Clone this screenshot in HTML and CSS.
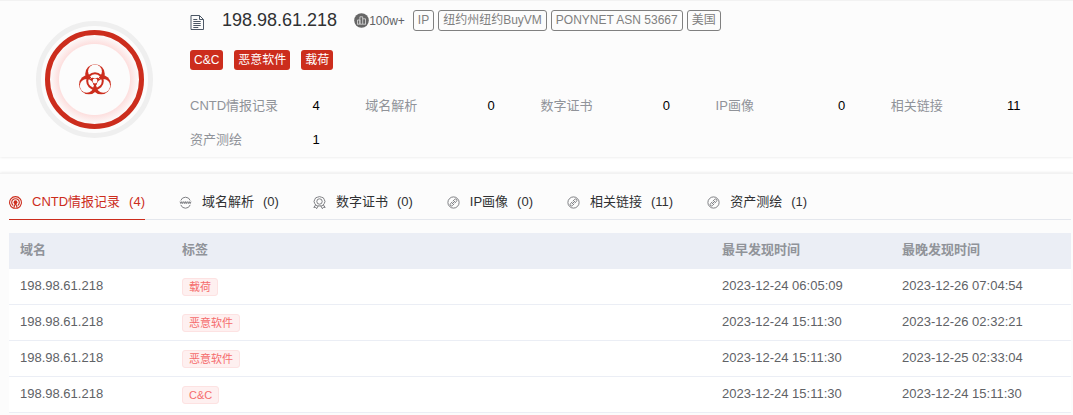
FILE: index.html
```html
<!DOCTYPE html>
<html lang="zh-CN">
<head>
    <meta charset="UTF-8">
    <meta name="viewport" content="width=device-width, initial-scale=1.0">
    <title>198.98.61.218</title>
    <link rel="stylesheet" href="styles.css">
</head>
<body>
    <svg class="sprite" aria-hidden="true">
        <symbol id="icon-compass" viewBox="0 0 13 13">
            <circle cx="6.5" cy="6.5" r="5.6"/>
            <path d="M5.8 5.2 7.6 3.4a1.2 1.2 0 0 1 1.9 1.9L7.7 7.2M7.2 7.8 5.4 9.6a1.2 1.2 0 0 1-1.9-1.9L5.3 5.8M4.9 8.1 8.1 4.9"/>
        </symbol>
    </svg>

    <section class="card summary">
        <div class="level">
            <div class="level-inner">
                <svg class="biohazard" viewBox="0 0 32 32">
                    <mask id="lobes">
                        <rect width="32" height="32" fill="#fff"/>
                        <circle cx="16" cy="7.4" r="6.9" fill="#000"/>
                        <circle cx="7.7" cy="21.8" r="6.9" fill="#000"/>
                        <circle cx="24.3" cy="21.8" r="6.9" fill="#000"/>
                        <circle cx="16" cy="17" r="2.4" fill="#000"/>
                    </mask>
                    <g mask="url(#lobes)">
                        <circle cx="16" cy="10" r="9.8"/>
                        <circle cx="9.9" cy="20.5" r="9.8"/>
                        <circle cx="22.1" cy="20.5" r="9.8"/>
                    </g>
                    <path class="gap" d="M11.6 14.5a5 5 0 0 1 8.8 0M20.9 17.7a5 5 0 0 1-3.8 4.2M14.9 21.9a5 5 0 0 1-3.8-4.2"/>
                    <circle class="ring" cx="16" cy="17" r="7.8"/>
                </svg>
            </div>
        </div>
        <div class="info">
            <div class="title-row">
                <svg class="doc" viewBox="0 0 14 15">
                    <path d="M1 .5h8.5l4 4v10H1zM9.5 .5v4h4M3.3 4.5h4M3.3 6.5h7.4M3.3 8.5h7.4M3.3 10.5h7.4M3.3 12.5h5"/>
                </svg>
                <h1>198.98.61.218</h1>
                <span class="hot">
                    <svg viewBox="0 0 15 15">
                        <circle cx="7.5" cy="7.5" r="7.3"/>
                        <path d="M3.5 11V7h2.4v4M5.9 11V3.8h2.8V11M8.7 5.8h2.8V11M3 11.2h9"/>
                    </svg>100w+
                </span>
                <div class="attrs">
                    <span>IP</span>
                    <span>纽约州纽约BuyVM</span>
                    <span>PONYNET ASN 53667</span>
                    <span>美国</span>
                </div>
            </div>
            <div class="threats">
                <span>C&amp;C</span>
                <span>恶意软件</span>
                <span>载荷</span>
            </div>
            <dl class="stats">
                <div><dt>CNTD情报记录</dt><dd>4</dd></div>
                <div><dt>域名解析</dt><dd>0</dd></div>
                <div><dt>数字证书</dt><dd>0</dd></div>
                <div><dt>IP画像</dt><dd>0</dd></div>
                <div><dt>相关链接</dt><dd>11</dd></div>
                <div><dt>资产测绘</dt><dd>1</dd></div>
            </dl>
        </div>
    </section>

    <section class="card detail">
        <nav class="tabs" role="tablist">
            <button class="tab active" role="tab" aria-selected="true">
                <svg viewBox="0 0 13 13">
                    <path d="M4 11.9a5.9 5.9 0 1 1 5 0M4.3 9.6a3.8 3.8 0 1 1 4.4 0"/>
                    <circle class="solid" cx="6.5" cy="6.2" r="1.9"/>
                    <path d="M6.5 7 4.6 12.2h3.8z"/>
                </svg>
                <span>CNTD情报记录</span><span>(4)</span>
            </button>
            <button class="tab" role="tab" aria-selected="false">
                <svg viewBox="0 0 13 13">
                    <path d="M1.8 4.5a5 5 0 0 1 9.4 0M1.8 8.9a5 5 0 0 0 9.4 0M1 5.6l.9 2 .9-2 .9 2 .9-2M4.9 5.6l.8 2 .8-2 .8 2 .8-2M8.5 5.6l.8 2 .9-2 .9 2 .9-2"/>
                </svg>
                <span>域名解析</span><span>(0)</span>
            </button>
            <button class="tab" role="tab" aria-selected="false">
                <svg viewBox="0 0 13 13">
                    <path d="M6.5.6 8.4 1.2 10.3 1.8 11.3 3.6 12 5.5 11.3 7.4 10.2 9.1 8.4 9.9H4.6L2.8 9.1 1.7 7.4 1 5.5 1.7 3.6 2.7 1.8 4.6 1.2zM2.6 9 .8 11.4l1.9-.1.9 1.4 1.6-2.8M10.4 9l1.8 2.4-1.9-.1-.9 1.4-1.6-2.8"/>
                    <circle cx="6.5" cy="5.5" r="2.7"/>
                </svg>
                <span>数字证书</span><span>(0)</span>
            </button>
            <button class="tab" role="tab" aria-selected="false">
                <svg><use href="#icon-compass"/></svg>
                <span>IP画像</span><span>(0)</span>
            </button>
            <button class="tab" role="tab" aria-selected="false">
                <svg><use href="#icon-compass"/></svg>
                <span>相关链接</span><span>(11)</span>
            </button>
            <button class="tab" role="tab" aria-selected="false">
                <svg><use href="#icon-compass"/></svg>
                <span>资产测绘</span><span>(1)</span>
            </button>
        </nav>

        <table class="records">
            <colgroup>
                <col class="col-name">
                <col>
                <col class="col-time">
                <col class="col-time">
            </colgroup>
            <thead>
                <tr><th>域名</th><th>标签</th><th>最早发现时间</th><th>最晚发现时间</th></tr>
            </thead>
            <tbody>
                <tr>
                    <td>198.98.61.218</td>
                    <td><span class="tag">载荷</span></td>
                    <td>2023-12-24 06:05:09</td>
                    <td>2023-12-26 07:04:54</td>
                </tr>
                <tr>
                    <td>198.98.61.218</td>
                    <td><span class="tag">恶意软件</span></td>
                    <td>2023-12-24 15:11:30</td>
                    <td>2023-12-26 02:32:21</td>
                </tr>
                <tr>
                    <td>198.98.61.218</td>
                    <td><span class="tag">恶意软件</span></td>
                    <td>2023-12-24 15:11:30</td>
                    <td>2023-12-25 02:33:04</td>
                </tr>
                <tr>
                    <td>198.98.61.218</td>
                    <td><span class="tag">C&amp;C</span></td>
                    <td>2023-12-24 15:11:30</td>
                    <td>2023-12-24 15:11:30</td>
                </tr>
            </tbody>
        </table>
    </section>
</body>
</html>
```

FILE: styles.css
```css
:root {
    --red: #cc2d1d;
    --card: #fcfcfc;
    --muted: #909399;
    --text: #606266;
}

* {
    box-sizing: border-box;
}

body {
    margin: 0;
    background: #fff;
    color: #303133;
    font-family: "Liberation Sans", Arial, "Noto Sans CJK SC", sans-serif;
    font-size: 13px;
    line-height: 18px;
}

.sprite {
    display: none;
}

.card {
    background: var(--card);
    border-top: 1px solid #f2f2f2;
    box-shadow: 0 0 3px rgba(0, 0, 0, 0.12);
}

/* Summary */
.summary {
    display: flex;
    gap: 37px;
    padding: 9px 7px 0 36px;
    margin-bottom: 16px;
}

.level {
    flex: none;
    width: 117px;
    height: 117px;
    margin-top: 11px;
    padding: 4px;
    border: 5px solid #efefef;
    border-radius: 50%;
}

.level-inner {
    display: flex;
    align-items: center;
    justify-content: center;
    height: 100%;
    border: 5px solid var(--red);
    border-radius: 50%;
    background: radial-gradient(circle, var(--card) 35px, #fde0df 36px, var(--card) 45px);
}

.biohazard {
    width: 32px;
    height: 32px;
    fill: var(--red);
}

.biohazard .ring {
    fill: none;
    stroke: var(--red);
    stroke-width: 2;
}

.biohazard .gap {
    fill: none;
    stroke: var(--card);
    stroke-width: 1;
}

.info {
    flex: 1;
}

.title-row {
    display: flex;
    align-items: center;
    height: 21px;
}

.doc {
    width: 14px;
    height: 15px;
    margin: 4px 18px 0 0;
    fill: none;
    stroke: #4d5866;
}

h1 {
    margin: 0 17px 0 0;
    font-size: 18px;
    font-weight: normal;
    line-height: 21px;
}

.hot {
    display: flex;
    align-items: center;
    margin-right: 8px;
    color: var(--text);
    font-size: 12px;
}

.hot svg {
    width: 15px;
    height: 15px;
    fill: #666;
}

.hot path {
    fill: none;
    stroke: #ddd;
    stroke-width: 0.8;
}

.attrs {
    display: flex;
    gap: 4px;
}

.attrs span {
    padding: 0 4px;
    border: 1px solid #808080;
    border-radius: 3px;
    color: #808080;
    font-size: 12px;
    line-height: 19px;
}

.threats {
    display: flex;
    gap: 11px;
    margin-top: 19px;
}

.threats span {
    padding: 0 4px;
    border-radius: 3px;
    background: var(--red);
    color: #fff;
    font-size: 12px;
    line-height: 20px;
}

.stats {
    display: grid;
    grid-template-columns: repeat(5, 1fr);
    margin: 19px 0 0;
    line-height: 34px;
}

.stats div {
    display: flex;
    justify-content: space-between;
    width: 74%;
}

.stats dt {
    color: var(--muted);
}

.stats dd {
    margin: 0;
    color: #000;
}

/* Detail */
.detail {
    padding: 11px 2px 2px 9px;
}

.tabs {
    display: flex;
    gap: 34px;
    margin-bottom: 13px;
    border-bottom: 1px solid #e4e7ed;
}

.tab {
    display: flex;
    align-items: center;
    height: 35px;
    margin-bottom: -1px;
    padding: 0;
    border: 0;
    border-bottom: 1px solid transparent;
    background: none;
    color: #303133;
    font: inherit;
    cursor: pointer;
}

.tab svg {
    width: 13px;
    height: 13px;
    margin-right: 10px;
    fill: none;
    stroke: #707276;
    stroke-width: 0.9;
}

.tab span + span {
    margin-left: 9px;
}

.tab.active {
    border-bottom: 1px solid var(--red);
    color: var(--red);
}

.tab.active svg {
    stroke: var(--red);
    stroke-width: 1.1;
}

.tab .solid {
    fill: var(--red);
    stroke: none;
}

.records {
    width: 100%;
    border-collapse: separate;
    border-spacing: 0;
    table-layout: fixed;
    background: #fff;
    color: var(--text);
}

.col-name {
    width: 162px;
}

.col-time {
    width: 180px;
}

.records th,
.records td {
    height: 36px;
    padding: 0 11px 1px;
    border-bottom: 1px solid #ebeef5;
    text-align: left;
}

.records th {
    background: #ebeef5;
    color: var(--muted);
}

.tag {
    display: block;
    width: fit-content;
    margin-top: 1px;
    padding: 0 6px;
    border: 1px solid #fde2e2;
    border-radius: 3px;
    background: #fef0f0;
    color: #f56c6c;
    font-size: 11px;
    line-height: 16px;
}
```
